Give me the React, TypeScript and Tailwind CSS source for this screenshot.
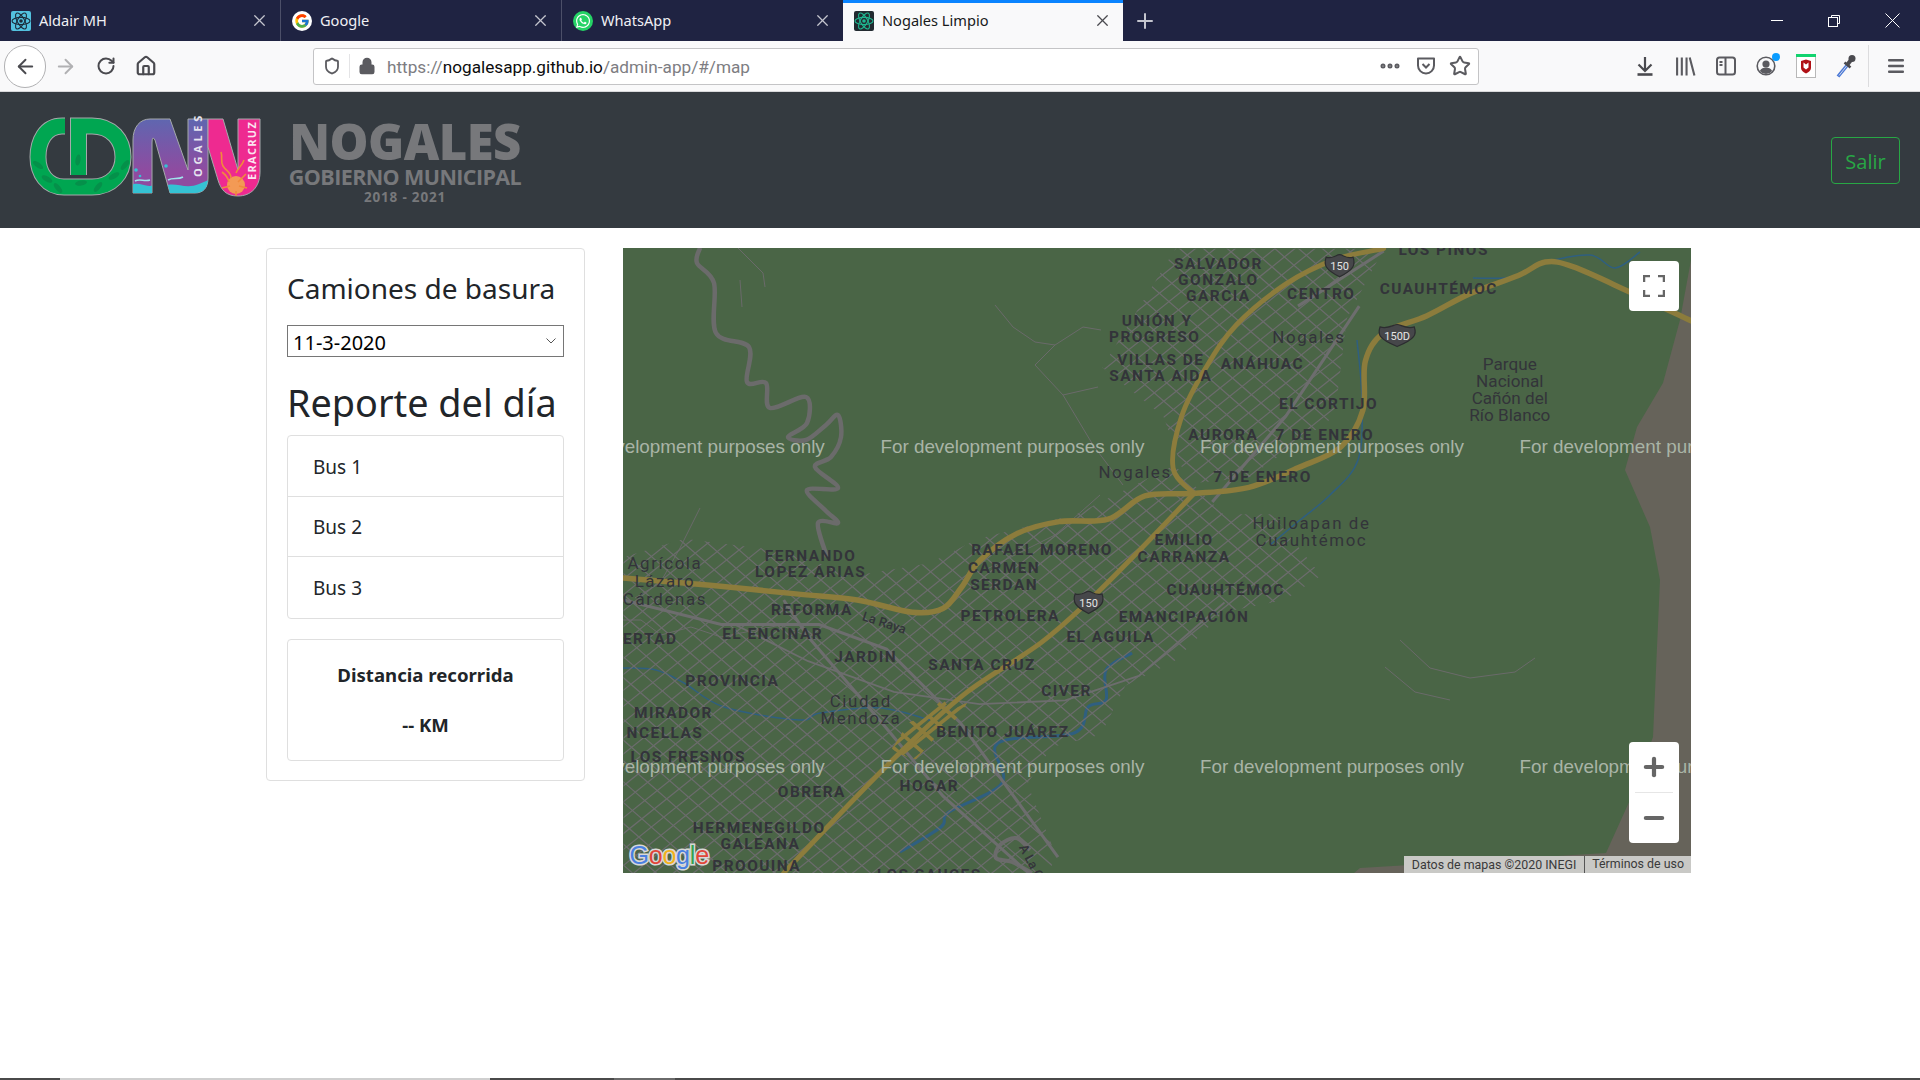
import { ArrowLeft, ArrowRight, Ellipsis, Home, Lock, Minus, Plus, RotateCw, Shield, Star, X } from "lucide-react";
import { FcGoogle } from "react-icons/fc";
import { FaWhatsapp } from "react-icons/fa";

const TABS = [
  { title: "Aldair MH", icon: "react" },
  { title: "Google", icon: "google" },
  { title: "WhatsApp", icon: "whatsapp" },
  { title: "Nogales Limpio", icon: "nogales", active: true },
];

// labels are in the coordinates of the scaled map group: [text, x, y, bold]
const LABELS: [string, number, number, boolean][] = [
  ["LOS PINOS", 1179, 208, true],
  ["SALVADOR", 995, 220, true],
  ["GONZALO", 995, 233, true],
  ["GARCIA", 995, 246, true],
  ["CENTRO", 1079, 244, true],
  ["CUAUHTÉMOC", 1175, 240, true],
  ["UNIÓN Y", 945, 266, true],
  ["PROGRESO", 943, 279, true],
  ["VILLAS DE", 948, 298, true],
  ["SANTA AIDA", 948, 311, true],
  ["ANÁHUAC", 1031, 301, true],
  ["Nogales", 1069, 280, false],
  ["EL CORTIJO", 1085, 334, true],
  ["AURORA", 999, 359, true],
  ["7 DE ENERO", 1082, 359, true],
  ["Nogales", 927, 390, false],
  ["7 DE ENERO", 1031, 394, true],
  ["Huiloapan de", 1071, 432, false],
  ["Cuauhtémoc", 1071, 446, false],
  ["EMILIO", 967, 445, true],
  ["CARRANZA", 967, 459, true],
  ["RAFAEL MORENO", 851, 453, true],
  ["CARMEN", 820, 468, true],
  ["SERDAN", 820, 482, true],
  ["FERNANDO", 662, 458, true],
  ["LOPEZ ARIAS", 662, 471, true],
  ["Agrícola", 543, 465, false],
  ["Lázaro", 543, 479, false],
  ["Cárdenas", 543, 494, false],
  ["REFORMA", 663, 502, true],
  ["CUAUHTÉMOC", 1001, 486, true],
  ["EMANCIPACIÓN", 967, 508, true],
  ["PETROLERA", 825, 507, true],
  ["EL ENCINAR", 631, 522, true],
  ["ERTAD", 531, 526, true],
  ["EL AGUILA", 907, 524, true],
  ["JARDIN", 707, 541, true],
  ["SANTA CRUZ", 802, 547, true],
  ["PROVINCIA", 598, 560, true],
  ["CIVER", 871, 568, true],
  ["Ciudad", 703, 577, false],
  ["Mendoza", 703, 591, false],
  ["MIRADOR", 550, 586, true],
  ["NCELLAS", 543, 603, true],
  ["BENITO JUÁREZ", 819, 602, true],
  ["LOS FRESNOS", 562, 622, true],
  ["HOGAR", 759, 646, true],
  ["OBRERA", 663, 651, true],
  ["HERMENEGILDO", 620, 680, true],
  ["GALEANA", 621, 693, true],
  ["PROOUINA", 618, 711, true],
  ["LOS SAUCES", 759, 719, true],
];

const PARQUE = [
  ["Parque", 302],
  ["Nacional", 316],
  ["Cañón del", 330],
  ["Río Blanco", 344],
] as const;

const WATERMARKS = [458, 719, 980, 1241].flatMap((x) => [370, 631].map((y) => ({ x, y })));

type Pt = [number, number];

// catmull-rom through the points, for roads and rivers
function smooth(pts: Pt[]) {
  let d = `M${pts[0][0]} ${pts[0][1]}`;
  for (let i = 0; i < pts.length - 1; i++) {
    const p0 = pts[Math.max(i - 1, 0)];
    const p1 = pts[i];
    const p2 = pts[i + 1];
    const p3 = pts[Math.min(i + 2, pts.length - 1)];
    const c1x = p1[0] + (p2[0] - p0[0]) / 6;
    const c1y = p1[1] + (p2[1] - p0[1]) / 6;
    const c2x = p2[0] - (p3[0] - p1[0]) / 6;
    const c2y = p2[1] - (p3[1] - p1[1]) / 6;
    d += `C${c1x} ${c1y} ${c2x} ${c2y} ${p2[0]} ${p2[1]}`;
  }
  return d;
}

const MOUNTAIN_ROAD: Pt[] = [
  [700, 248], [697, 263], [714, 283], [716, 333], [749, 347], [747, 382], [766, 383], [770, 408], [806, 397],
  [807, 423], [788, 437], [806, 440], [826, 425], [838, 415], [841, 437], [831, 457], [815, 467], [838, 488],
  [807, 490], [825, 510], [838, 523], [818, 523], [827, 557],
];
const SOUTH_ROAD: Pt[] = [[1032, 873], [1012, 862], [996, 858], [1000, 845], [1016, 838], [1030, 850]];
const HIGHWAY_EAST: Pt[] = [
  [509, 472], [580, 478], [650, 485], [700, 490], [745, 500], [770, 497], [785, 480], [800, 458], [830, 436],
  [865, 426], [905, 424], [935, 405], [975, 403], [1020, 398], [1060, 382], [1095, 365], [1113, 335], [1115, 295],
  [1130, 272], [1165, 258], [1200, 240], [1240, 225], [1262, 214], [1285, 218], [1330, 238], [1381, 262],
];
const HIGHWAY_NORTH: Pt[] = [
  [975, 403], [958, 382], [965, 340], [985, 300], [1010, 265], [1050, 232], [1090, 212], [1130, 203],
];
const HIGHWAY_SOUTH: Pt[] = [
  [640, 713], [700, 650], [745, 605], [790, 565], [850, 525], [890, 490], [930, 450], [975, 403],
];
const RIVER_WEST: Pt[] = [[623, 668], [656, 670], [684, 683], [724, 707], [799, 720], [820, 713], [880, 708], [930, 720]];
const RIVER_SOUTH: Pt[] = [
  [900, 852], [941, 827], [949, 812], [1002, 783], [998, 743], [1074, 733], [1088, 707], [1106, 700], [1106, 670], [1132, 653],
];
const RIVER_NORTH: Pt[] = [[1357, 340], [1362, 400], [1358, 460], [1330, 495], [1300, 520], [1270, 545]];
const RIVER_EAST: Pt[] = [[1473, 278], [1513, 277], [1543, 263], [1590, 255], [1615, 268], [1640, 252]];

function AtomIcon({ bg, color }: { bg: string; color: string }) {
  return (
    <svg viewBox="0 0 20 20" className="h-5 w-5 shrink-0">
      <rect width="20" height="20" rx="2" fill={bg} />
      <g fill="none" stroke={color} strokeWidth="1.1">
        <ellipse cx="10" cy="10" rx="9" ry="3.6" />
        <ellipse cx="10" cy="10" rx="9" ry="3.6" transform="rotate(60 10 10)" />
        <ellipse cx="10" cy="10" rx="9" ry="3.6" transform="rotate(120 10 10)" />
      </g>
      <circle cx="10" cy="10" r="1.8" fill={color} />
    </svg>
  );
}

function TabIcon({ icon }: { icon: string }) {
  if (icon === "react") return <AtomIcon bg="#53c1de" color="#1c2b3a" />;
  if (icon === "nogales") return <AtomIcon bg="#222a30" color="#1fb58f" />;
  if (icon === "google") {
    return (
      <span className="flex h-5 w-5 shrink-0 items-center justify-center rounded-full bg-white">
        <FcGoogle className="h-4 w-4" />
      </span>
    );
  }
  return (
    <span className="flex h-5 w-5 shrink-0 items-center justify-center rounded-full bg-[#25d366]">
      <FaWhatsapp className="h-4 w-4 text-white" />
    </span>
  );
}

function TabBar() {
  return (
    <div className="flex h-[41px] shrink-0 items-stretch bg-[#1f2342]">
      {TABS.map((t, i) => (
        <div
          key={t.title}
          className={
            t.active
              ? "flex w-[280px] items-center border-t-[3px] border-[#0a84ff] bg-[#f9f9fa] pr-[11px] pb-[3px] pl-[11px] text-[#18191a]"
              : i === 2
                ? "flex w-[281px] items-center pr-[11px] pl-[11px] text-[#f0f0f4]"
                : "flex w-[281px] items-center border-r border-[#4c4f68] pr-[11px] pl-[11px] text-[#f0f0f4]"
          }
        >
          <TabIcon icon={t.icon} />
          <span className="ml-2 flex-1 text-[14.6px] leading-none">{t.title}</span>
          <X className={t.active ? "h-[19px] w-[19px] text-[#4a4a4f]" : "h-[19px] w-[19px] text-[#c4c5ce]"} strokeWidth={1.6} />
        </div>
      ))}
      <div className="flex w-[44px] items-center justify-center">
        <Plus className="h-6 w-6 text-[#c4c5ce]" strokeWidth={2} />
      </div>
      <div className="flex flex-1 items-center justify-end">
        <div className="flex h-[38px] w-[56px] items-center justify-center">
          <div className="h-px w-3 bg-white" />
        </div>
        <div className="flex h-[38px] w-[58px] items-center justify-center">
          <svg viewBox="0 0 12 12" className="h-3 w-3" fill="none" stroke="#fff">
            <path d="M3.5 2.5V.5h8v8h-2" />
            <rect x=".5" y="2.5" width="9" height="9" />
          </svg>
        </div>
        <div className="flex h-[38px] w-[57px] items-center justify-end pr-5">
          <svg viewBox="0 0 15 15" className="h-[15px] w-[15px]" stroke="#fff">
            <path d="M.5.5l14 14M14.5.5l-14 14" />
          </svg>
        </div>
      </div>
    </div>
  );
}

function ToolbarExtras() {
  return (
    <div className="flex flex-1 items-center">
      <div className="flex w-[389px] items-center justify-between pr-[12px] pl-[156px]">
        <svg viewBox="0 0 20 20" className="h-5 w-5" fill="none" stroke="#4a4a4f" strokeWidth="2.2">
          <path d="M10 1v13M3.500 8.500l6.500 6.500 6.500-6.500" />
          <path d="M2.500 18.500h15" strokeWidth="2.600" />
        </svg>
        <svg viewBox="0 0 20 20" className="h-[21px] w-[21px]" fill="none" stroke="#5b5b60" strokeWidth="2">
          <path d="M2 1.500v17M6.500 1.500v17M11 1.500v17M14 1.500l4.500 17" />
        </svg>
        <svg viewBox="0 0 20 20" className="h-5 w-5" fill="none" stroke="#5b5b60" strokeWidth="2">
          <rect x="1" y="1.500" width="18" height="17" rx="2.500" />
          <path d="M9.500 1.500v17M3.500 6h3M3.500 9h3" />
        </svg>
        <span className="relative flex h-5 w-5 items-center justify-center">
          <svg viewBox="0 0 20 20" className="h-5 w-5" fill="#5b5b60">
            <circle cx="10" cy="10" r="8.800" fill="none" stroke="#5b5b60" strokeWidth="1.600" />
            <circle cx="10" cy="8" r="3.600" />
            <path d="M3.800 15c1.500-3 3.600-3.600 6.200-3.600s4.700.6 6.200 3.600a8 8 0 0 1-12.400 0z" />
          </svg>
          <span className="absolute -top-[3px] -right-[4px] h-2 w-2 rounded-full bg-[#0a9cff]" />
        </span>
        <svg viewBox="0 0 20 24" className="h-[24px] w-5">
          <rect x=".5" y=".5" width="19" height="23" fill="#fff" stroke="#b8b8b8" />
          <rect width="20" height="3" fill="#12d36f" />
          <path d="M5 7l5-1.500L15 7v7c0 2.500-2.500 4.500-5 5.500C7.500 18.500 5 16.500 5 14z" fill="#b01116" />
          <path d="M7.500 8.500v5l2.500 2 2.500-2v-5l-2.500 2z" fill="#fff" />
        </svg>
        <svg viewBox="0 0 20 24" className="h-[24px] w-5" fill="none">
          <path d="M2 22.500l9-11" stroke="#4a78d6" strokeWidth="3.500" />
          <path d="M3 21.500l8-10" stroke="#cfd8ea" strokeWidth="1" />
          <path d="M8.500 8.500l6 5" stroke="#4a4a4f" strokeWidth="2.500" />
          <path d="M11 11l4-5" stroke="#4a4a4f" strokeWidth="4" />
          <circle cx="16" cy="4.500" r="3.500" fill="#4a4a4f" />
        </svg>
      </div>
      <div className="h-[42px] w-px bg-[#dcdcde]" />
      <svg viewBox="0 0 16 14" className="ml-[19px] h-[14px] w-4" fill="#5b5b60">
        <rect width="16" height="2.500" rx="1" />
        <rect y="5.750" width="16" height="2.500" rx="1" />
        <rect y="11.500" width="16" height="2.500" rx="1" />
      </svg>
    </div>
  );
}

function Toolbar() {
  return (
    <div className="flex h-[51px] shrink-0 items-center border-b border-[#d8d8da] bg-[#f9f9fa]">
      <div className="ml-1 flex h-[43px] w-[42px] items-center justify-center rounded-full border border-[#b1b1b3] bg-white">
        <ArrowLeft className="h-[23px] w-[23px] text-[#4a4a4f]" strokeWidth={2} />
      </div>
      <ArrowRight className="ml-[8px] h-[23px] w-[23px] text-[#b1b1b3]" strokeWidth={2} />
      <RotateCw className="ml-[19px] h-[20px] w-[20px] text-[#4a4a4f]" strokeWidth={2.4} />
      <Home className="ml-[19px] h-[22px] w-[22px] text-[#4a4a4f]" strokeWidth={2.4} />
      <div className="ml-[156px] flex h-[37px] w-[1166px] shrink-0 items-center rounded-[3px] border border-[#c4c4c6] bg-white">
        <Shield className="ml-[9px] h-[18px] w-[18px] text-[#5b5b60]" strokeWidth={2.4} />
        <div className="ml-[8px] h-6 w-px bg-[#e4e4e6]" />
        <Lock className="ml-[8px] h-[18px] w-[18px] fill-[#5b5b60] text-[#5b5b60]" strokeWidth={2} />
        <div className="ml-[11px] flex-1 pt-[3px] font-['Roboto',sans-serif] text-[17.2px] leading-none text-[#7d7d82]">
          https://<span className="text-[#0c0c0d]">nogalesapp.github.io</span>/admin-app/#/map
        </div>
        <Ellipsis className="h-6 w-6 text-[#5b5b60]" strokeWidth={3} />
        <svg viewBox="0 0 20 20" className="ml-[14px] h-5 w-5" fill="none" stroke="#5b5b60" strokeWidth="2">
          <path d="M2 2.500h16v7a8 8 0 0 1-16 0z" strokeLinejoin="round" />
          <path d="M6.500 8l3.500 3.500L13.500 8" />
        </svg>
        <Star className="mr-[7px] ml-[13px] h-[22px] w-[22px] text-[#5b5b60]" strokeWidth={2.2} />
      </div>
      <ToolbarExtras />
    </div>
  );
}

const GREEN_RING = "M65 126H62C45 126 38 142 38 157C38 173 47 187 64 187H92C112 187 123 173 123 157C123 140 112 126 92 126H78.500V175";
const PURPLE_N = "M133 193V140C133 127 140 119 150 119H170L188 170V119H208V178C208 188 203 193 195 193H170L155 140Q152 135 152 143V193Z";
const PINK_U = "M208 119H223L238 170V119H260V172C260 187 251 196 238 196C226 196 221 190 218 180L208 147Z";

// the viewBox is the logo's place on the page, so these are page pixels
function Logo() {
  return (
    <svg viewBox="20 110 260 95" className="mt-[18px] h-[95px] w-[260px] shrink-0 self-start">
      <defs>
        <linearGradient id="purple" x1="0" y1="0" x2="0" y2="1">
          <stop offset="0" stopColor="#5f66b0" />
          <stop offset="0.7" stopColor="#8f4ba0" />
        </linearGradient>
        <clipPath id="purple-clip">
          <path d={PURPLE_N} />
        </clipPath>
        <clipPath id="pink-clip">
          <path d={PINK_U} />
        </clipPath>
      </defs>
      <path d={GREEN_RING} fill="none" stroke="#a5a9ab" strokeWidth="17" />
      <path d={GREEN_RING} fill="none" stroke="#00a651" strokeWidth="15" />
      <g fill="#05904a">
        <ellipse cx="38" cy="165" rx="6" ry="2.500" transform="rotate(35 38 165)" />
        <ellipse cx="47" cy="179" rx="6" ry="2.500" transform="rotate(30 47 179)" />
        <ellipse cx="58" cy="188" rx="6" ry="2.500" transform="rotate(50 58 188)" />
        <ellipse cx="81" cy="183" rx="6" ry="2.500" transform="rotate(-10 81 183)" />
        <ellipse cx="98" cy="187" rx="6" ry="2.500" transform="rotate(-50 98 187)" />
        <ellipse cx="114" cy="176" rx="6" ry="2.500" transform="rotate(-30 114 176)" />
        <ellipse cx="125" cy="165" rx="6" ry="2.500" transform="rotate(-50 125 165)" />
        <ellipse cx="78" cy="160" rx="5.500" ry="2.500" transform="rotate(-80 78 160)" />
      </g>

      <path d={PURPLE_N} fill="url(#purple)" stroke="#a5a9ab" />
      <g clipPath="url(#purple-clip)">
        <path d="M130 186c8-6 16 3 24-1v10h-24zM165 186c10-5 20 4 34-2l12-5v16h-46z" fill="#35c2d4" />
        <path d="M135 181c5-3 9 1 15-1M168 180c5-3 10 0 15-3" fill="none" stroke="#9fe4ec" strokeWidth="1.500" />
        <circle cx="136" cy="170" r="1.800" fill="#35c2d4" />
        <circle cx="166" cy="166" r="1.800" fill="#35c2d4" />
        <circle cx="140" cy="176" r="1.300" fill="#35c2d4" />
      </g>

      <path d={PINK_U} fill="#ee2a90" stroke="#a5a9ab" />
      <g clipPath="url(#pink-clip)">
        <circle cx="236" cy="185" r="9" fill="#f39a55" />
        <path d="M221 152c2 6-1 9 2 14s8 6 8 12M244 160c-2 6-6 8-8 13M222 172c4 3 6 6 7 10M246 174l-8 8" fill="none" stroke="#f08a3c" strokeWidth="1.600" />
        <path d="M222 188l8-2M247 188l-8-2M236 197v-6" stroke="#f08a3c" strokeWidth="1.600" />
      </g>
      <text
        transform="translate(201.500 177) rotate(-90)"
        className="font-['Open_Sans',sans-serif]"
        fontSize="11"
        fontWeight="700"
        letterSpacing="3.700"
        fill="#e6e4f0"
      >
        OGALES
      </text>
      <text
        transform="translate(256 180) rotate(-90)"
        className="font-['Open_Sans',sans-serif]"
        fontSize="11"
        fontWeight="700"
        letterSpacing="1.300"
        fill="#fbe4f0"
      >
        ERACRUZ
      </text>
    </svg>
  );
}

function Header() {
  return (
    <header className="flex h-[136px] shrink-0 items-center bg-[#343a40] pr-5 pl-5 font-['Open_Sans',sans-serif]">
      <Logo />
      <div className="ml-[9px] flex w-[232px] flex-col items-center text-[#77787b]">
        <div className="mt-[3px] text-[49px] leading-[46px] font-extrabold tracking-[-0.6px]">NOGALES</div>
        <div className="mt-[1px] text-[21.5px] leading-[24px] font-bold tracking-[-0.6px] whitespace-nowrap">GOBIERNO MUNICIPAL</div>
        <div className="text-[13.5px] leading-[17px] font-bold tracking-[0.8px]">2018 - 2021</div>
      </div>
      <button className="ml-auto h-[47px] w-[69px] rounded border border-[#28a745] pt-[3px] text-[20px] text-[#28a745]">Salir</button>
    </header>
  );
}

function Sidebar() {
  return (
    <div className="h-[533px] w-[319px] shrink-0 rounded border border-[#dfdfdf] p-5 text-[#212529]">
      <h3 className="text-[28px] leading-[38px] whitespace-nowrap">Camiones de basura</h3>
      <div className="mt-[18px] flex h-8 w-[277px] items-center justify-between border border-[#767676] pr-[7px] pl-[5px] text-[20px] text-black">
        <span className="pt-[3px]">11-3-2020</span>
        <svg viewBox="0 0 10 6" className="h-[6px] w-[10px]" fill="none" stroke="#555">
          <path d="M.5.5L5 5 9.500.5" />
        </svg>
      </div>
      <h2 className="mt-[22px] mb-2 text-[37.8px] leading-[48px] whitespace-nowrap">Reporte del día</h2>
      <ul className="w-[277px] divide-y divide-[#dfdfdf] rounded border border-[#dfdfdf]">
        {["Bus 1", "Bus 2", "Bus 3"].map((b) => (
          <li key={b} className="flex h-[60.6px] items-center pt-[2px] pl-[25px] text-[19px]">
            {b}
          </li>
        ))}
      </ul>
      <div className="mt-5 flex h-[122px] w-[277px] flex-col items-center rounded border border-[#dfdfdf] pt-5 text-[18.6px] font-bold">
        <p className="leading-[30px]">Distancia recorrida</p>
        <p className="mt-5 leading-[30px]">-- KM</p>
      </div>
    </div>
  );
}

function Shield150({ x, y, text, w = 22 }: { x: number; y: number; text: string; w?: number }) {
  return (
    <g transform={`translate(${x} ${y})`}>
      <path
        d={`M${-w / 2} -7c${w / 4} 2 ${w / 2 - 3} -2 ${w / 2} -2c3 0 ${w / 4} 4 ${w / 2} 2c2 6 1 10 -${w / 2} 16c-${w / 2 + 1} -6 -${w / 2 + 2} -10 -${w / 2} -16z`}
        fill="#46474a"
        stroke="#2c2d30"
      />
      <text y="3.500" textAnchor="middle" fontSize="9" fill="#e4e4e4">
        {text}
      </text>
    </g>
  );
}

function MapDrawing() {
  const ne = Array.from({ length: 40 }, (_, i) => 297 + i * 13);
  const se = Array.from({ length: 62 }, (_, i) => -409 + i * 17);
  return (
    <svg viewBox="623 248 1068 625" className="h-[625px] w-[1068px] font-['Roboto',sans-serif]">
      <defs>
        <clipPath id="city">
          <path d="M509 455l50-15 80 10 60 20 60-10 40-20 80-20 80-40 40 40 40 0 40 50-30 20-50 10-40 40-40 20-20 40-40 10-20 30 20 50v23H509zM900 300l60-97h170l-30 57-10 80-70 50-50 5-20-55z" />
        </clipPath>
        <clipPath id="downtown">
          <path d="M728 612l14-22 16-6 12-14 6 10 14-6-8 12-16 14-18 20-8-2z" />
        </clipPath>
      </defs>
      <rect x="623" y="248" width="1068" height="625" fill="#4a6546" />
      <path d="M1691 260l-11 60-17 63-26 44-12 43 25 57 10 53-7 157-23 63-24 53-246 15-6 5h337z" fill="#66635a" />

      <path d={smooth(MOUNTAIN_ROAD)} fill="none" stroke="#6b6b6b" strokeWidth="4.500" strokeLinejoin="round" />
      <path d={smooth(SOUTH_ROAD)} fill="none" stroke="#6b6b6b" strokeWidth="4" />
      <g fill="none" stroke="#6a6a6a" strokeWidth="1">
        <path d="M738 248l25 25 2 14M740 280l2 27M995 305l18 22 22 15 20 3 28-18 18 3M1055 345l-20 20 28 30 30 50 30 40M1063 395l35-8M1100 495l-45 40-70 35" />
        <path d="M700 508l-20 40-20 35-25 15M623 620l18 0 20 15 30-8 30 10 60-12 35 15M1400 640l30 28 40 10 45-6 20-14M1450 700l-35 -8 -30-25" />
      </g>

      <g fill="none" stroke="#2f5f80">
        <path d={smooth(RIVER_WEST)} strokeWidth="1.500" />
        <path d={smooth(RIVER_SOUTH)} strokeWidth="3" />
        <path d={smooth(RIVER_NORTH)} strokeWidth="1.500" />
        <path d={smooth(RIVER_EAST)} strokeWidth="1.500" />
      </g>

      <g transform="scale(1.2245)">
        <g clipPath="url(#city)" stroke="#6c6c6d" strokeWidth="1">
          {ne.map((c) => (
            <line key={c} x1={400} y1={c + 250} x2={1200} y2={c - 390} />
          ))}
          {se.map((c) => (
            <line key={c} x1={400} y1={c} x2={1200} y2={c + 700} />
          ))}
        </g>
        {/* wider avenues */}
        <g fill="none" stroke="#6d6d6e" strokeWidth="2.500">
          <path d="M509 490l80 20 80 0 55 20 60 60 80 110" />
          <path d="M640 490l20 30 60 70 50 60 70 63" />
          <path d="M600 510l60 30 70 25 70 10 70-3 60-20 70-60" strokeWidth="1.500" />
          <path d="M1060 250l70-45M990 410l60-70 60-90" />
        </g>
        {/* yellow street grid downtown */}
        <g clipPath="url(#downtown)" stroke="#8c7c3c" strokeWidth="3">
          {ne.map((c) => (
            <line key={c} x1={400} y1={c + 250} x2={1200} y2={c - 390} />
          ))}
          {se.map((c) => (
            <line key={c} x1={400} y1={c} x2={1200} y2={c + 700} />
          ))}
        </g>

        <g fill="none" stroke="#8c7c3c" strokeLinejoin="round" strokeLinecap="round">
          <path d={smooth(HIGHWAY_EAST)} strokeWidth="4.500" />
          <path d={smooth(HIGHWAY_NORTH)} strokeWidth="4" />
          <path d={smooth(HIGHWAY_SOUTH)} strokeWidth="4" />
        </g>

        <Shield150 x={1094} y={217} text="150" />
        <Shield150 x={1141} y={274} text="150D" w={28} />
        <Shield150 x={889} y={492} text="150" />

        <g textAnchor="middle" fill="#33343a">
          {LABELS.map(([t, x, y, bold]) => (
            <text key={t + x + y} x={x} y={y} fontSize={bold ? 12.6 : 13.8} fontWeight={bold ? 700 : 400} letterSpacing={bold ? 1.2 : 1.3}>
              {t}
            </text>
          ))}
          {PARQUE.map(([t, y]) => (
            <text key={t} x={1233} y={y} fontSize="14">
              {t}
            </text>
          ))}
          <text transform="translate(721 512) rotate(18)" fontSize="10.500" fontWeight="500">
            La Raya
          </text>
          <text transform="translate(832 692) rotate(62)" textAnchor="start" fontSize="10.500" fontWeight="500">
            A La Cruz
          </text>
        </g>

        <g className="font-['Liberation_Sans',sans-serif]" fontSize="15.400" fill="#a9b4a6">
          {WATERMARKS.map((m) => (
            <text key={`${m.x}-${m.y}`} x={m.x} y={m.y}>
              For development purposes only
            </text>
          ))}
        </g>

        <text x="514" y="706" fontSize="20.500" fontWeight="500" letterSpacing="-0.2" stroke="#d8d8d8" strokeWidth="2.500" paintOrder="stroke" className="font-['Liberation_Sans',sans-serif]">
          <tspan fill="#4a80e0">G</tspan>
          <tspan fill="#e0463a">o</tspan>
          <tspan fill="#f2b21c">o</tspan>
          <tspan fill="#4a80e0">g</tspan>
          <tspan fill="#34a24f">l</tspan>
          <tspan fill="#e0463a">e</tspan>
        </text>
      </g>
    </svg>
  );
}

function MapPanel() {
  return (
    <div className="relative ml-[38px] h-[625px] w-[1068px] shrink-0 overflow-hidden">
      <MapDrawing />
      <button className="absolute top-[13px] right-3 flex h-[50px] w-[50px] items-center justify-center rounded-sm bg-white">
        <svg viewBox="0 0 22 22" className="h-[22px] w-[22px]" fill="none" stroke="#666" strokeWidth="2.500">
          <path d="M1 7V1h6M15 1h6v6M21 15v6h-6M7 21H1v-6" />
        </svg>
      </button>
      <div className="absolute right-3 bottom-[30px] flex h-[101px] w-[50px] flex-col items-center rounded-sm bg-white">
        <div className="flex h-[50px] items-center">
          <Plus className="h-7 w-7 text-[#666]" strokeWidth={3.6} absoluteStrokeWidth />
        </div>
        <div className="h-px w-[38px] bg-[#e6e6e6]" />
        <div className="flex h-[50px] items-center">
          <Minus className="h-7 w-7 text-[#666]" strokeWidth={3.6} absoluteStrokeWidth />
        </div>
      </div>
      <div className="absolute right-0 bottom-0 flex h-[17px] items-center bg-[#c9c9c6] font-['Roboto',sans-serif] text-[12.4px] text-[#3a3a3a]">
        <span className="border-r border-[#555] px-2 leading-[17px]">Datos de mapas ©2020 INEGI</span>
        <span className="px-[7px]">Términos de uso</span>
      </div>
    </div>
  );
}

export default function App() {
  return (
    <div className="flex h-screen flex-col overflow-hidden bg-white font-['Noto_Sans',sans-serif]">
      <TabBar />
      <Toolbar />
      <Header />
      <main className="flex flex-1 items-start pt-5 pl-[266px]">
        <Sidebar />
        <MapPanel />
      </main>
      {/* taskbar edge peeking in at the bottom of the capture */}
      <div className="flex h-[2px] shrink-0 bg-[#4a4a4a]">
        <div className="ml-[60px] w-[430px] bg-[#cfcfcf]" />
        <div className="ml-[124px] w-[61px] bg-[#6a6a6a]" />
      </div>
    </div>
  );
}
